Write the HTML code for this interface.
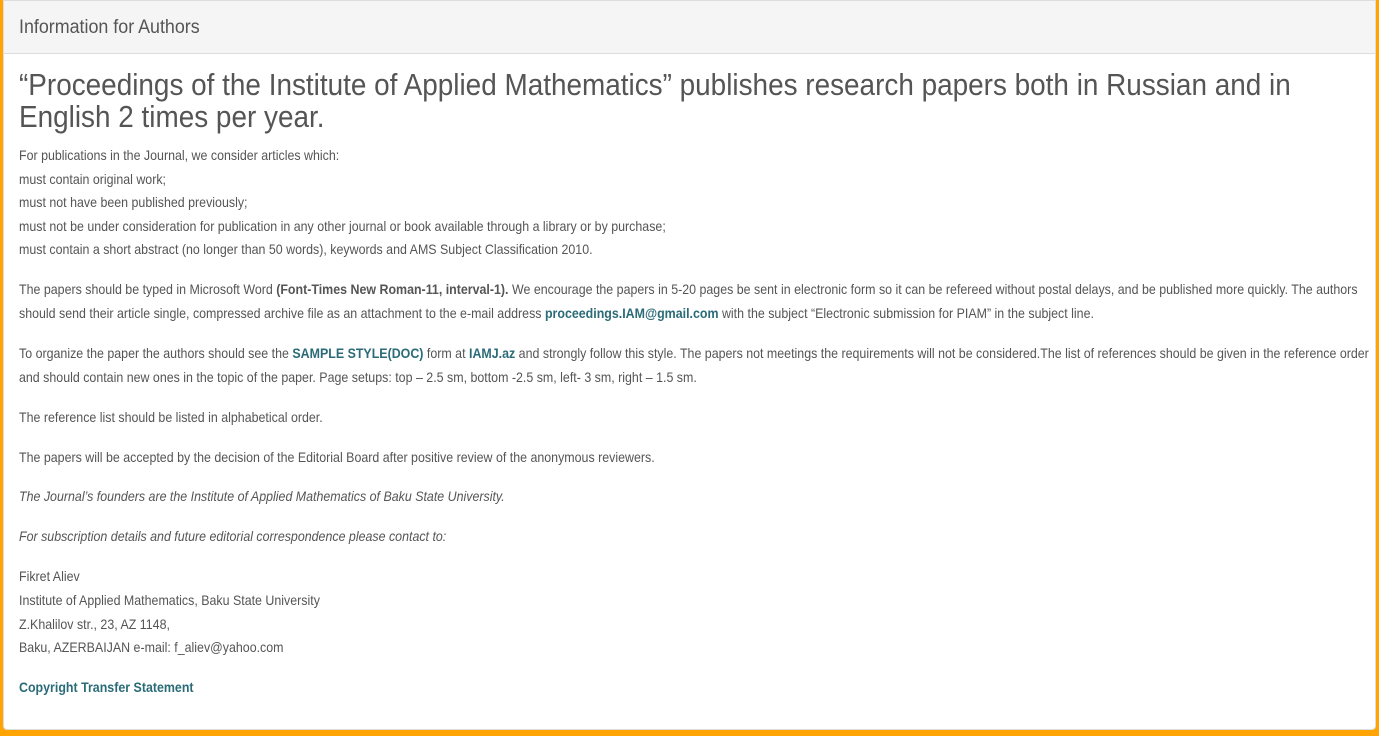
<!DOCTYPE html>
<html><head><meta charset="utf-8"><style>
html,body{margin:0;padding:0;}
body{width:1379px;height:736px;background:#FFA400;overflow:hidden;font-family:"Liberation Sans",sans-serif;color:#555;}
.panel{position:absolute;left:3px;top:0;width:1373px;height:730px;background:#fff;border:1px solid #ddd;border-radius:0 0 4px 4px;box-sizing:border-box;}
.hd{height:53px;background:#f5f5f5;border-bottom:1px solid #ddd;box-sizing:border-box;}
.hd span{position:absolute;left:15px;top:16px;font-size:19px;color:#555;transform:scaleX(0.94);transform-origin:0 0;white-space:nowrap;}
.c{position:absolute;left:15px;top:64px;width:1560px;transform:scaleX(0.9);transform-origin:0 0;white-space:nowrap;}
h1{font-weight:normal;font-size:31px;line-height:32px;margin:4px 0 11px;color:#555;}
p{font-size:13.8px;line-height:23.6px;margin:0 0 16.4px;}
b.l{color:#2a6b77;}
</style></head><body>
<div class="panel">
<div class="hd"><span>Information for Authors</span></div>
<div class="c">
<h1>“Proceedings of the Institute of Applied Mathematics” publishes research papers both in Russian and in<br>English 2 times per year.</h1>
<p>For publications in the Journal, we consider articles which:<br>must contain original work;<br>must not have been published previously;<br>must not be under consideration for publication in any other journal or book available through a library or by purchase;<br>must contain a short abstract (no longer than 50 words), keywords and AMS Subject Classification 2010.</p>
<p>The papers should be typed in Microsoft Word <b>(Font-Times New Roman-11, interval-1).</b> We encourage the papers in 5-20 pages be sent in electronic form so it can be refereed without postal delays, and be published more quickly. The authors<br>should send their article single, compressed archive file as an attachment to the e-mail address <b class="l">proceedings.IAM@gmail.com</b> with the subject “Electronic submission for PIAM” in the subject line.</p>
<p>To organize the paper the authors should see the <b class="l">SAMPLE STYLE(DOC)</b> form at <b class="l">IAMJ.az</b> and strongly follow this style. The papers not meetings the requirements will not be considered.The list of references should be given in the reference order<br>and should contain new ones in the topic of the paper. Page setups: top – 2.5 sm, bottom -2.5 sm, left- 3 sm, right – 1.5 sm.</p>
<p>The reference list should be listed in alphabetical order.</p>
<p>The papers will be accepted by the decision of the Editorial Board after positive review of the anonymous reviewers.</p>
<p><i>The Journal’s founders are the Institute of Applied Mathematics of Baku State University.</i></p>
<p><i>For subscription details and future editorial correspondence please contact to:</i></p>
<p>Fikret Aliev<br>Institute of Applied Mathematics, Baku State University<br>Z.Khalilov str., 23, AZ 1148,<br>Baku, AZERBAIJAN e-mail: f_aliev@yahoo.com</p>
<p><b class="l">Copyright Transfer Statement</b></p>
</div>
</div>
</body></html>
